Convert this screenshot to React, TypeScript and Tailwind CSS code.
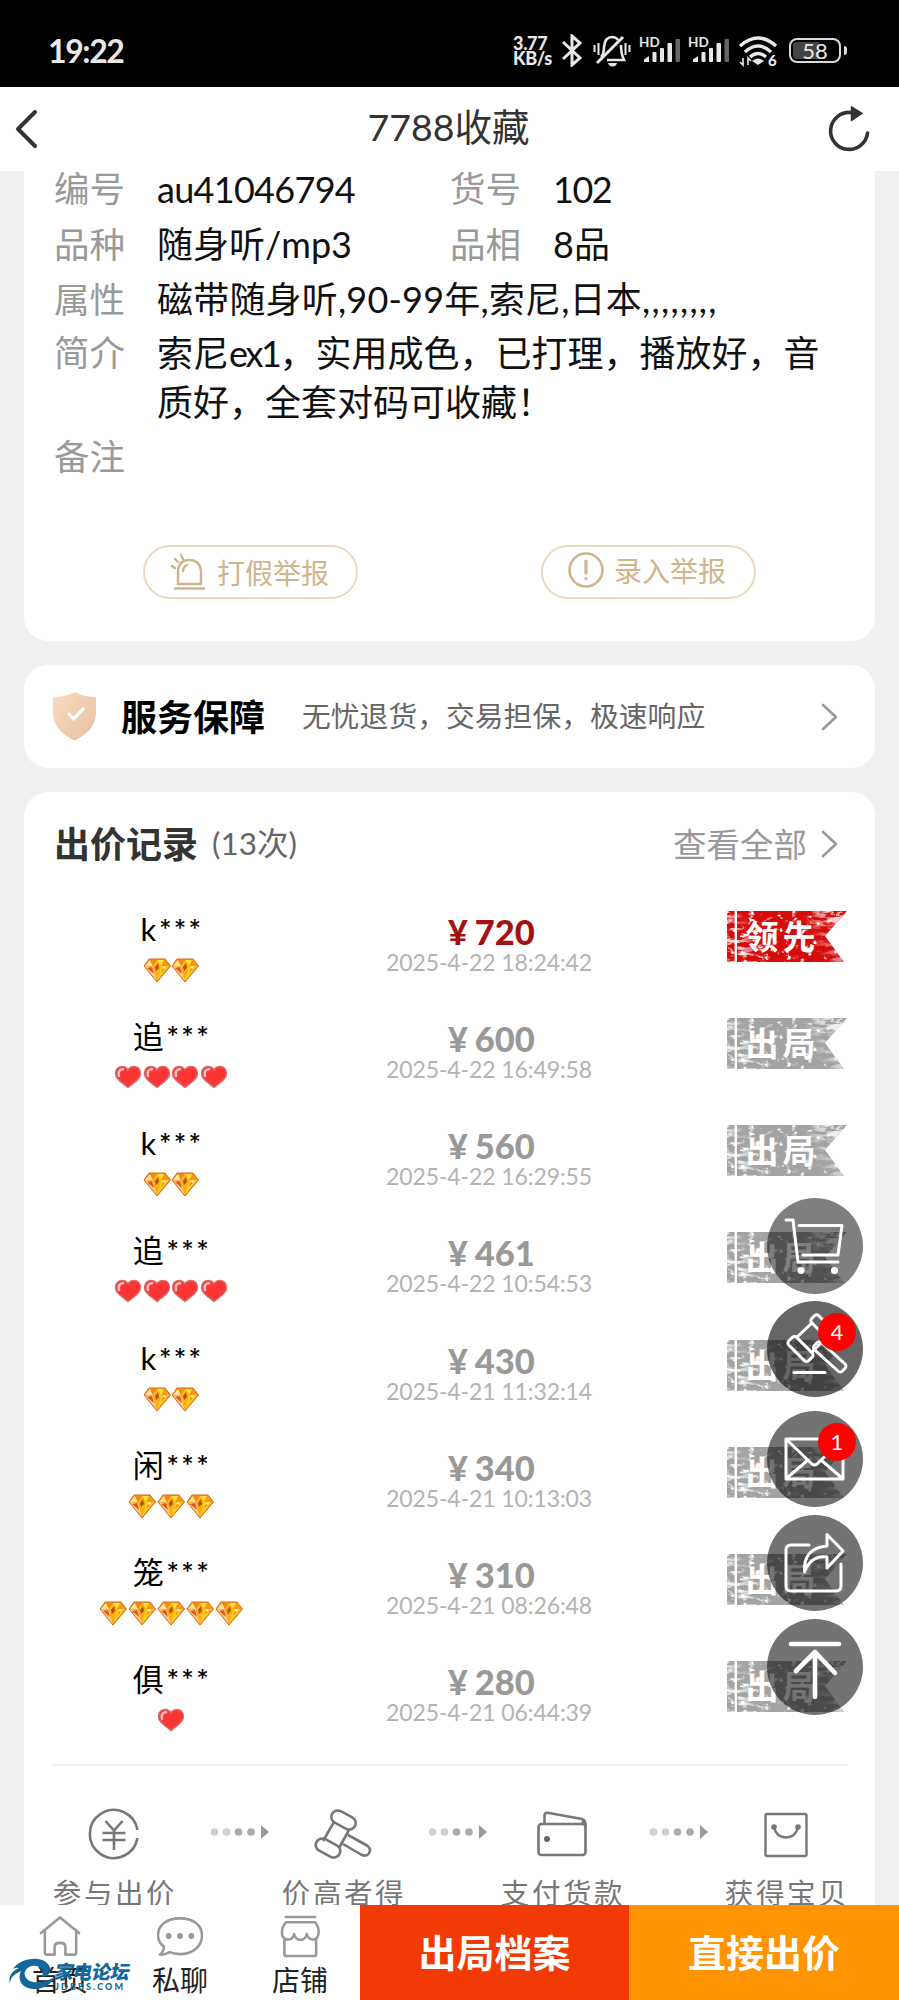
import type { ReactNode } from 'react'

type Rank = 'gem' | 'heart'

interface Bid {
  name: string
  rank: Rank
  level: number
  price: number
  time: string
}

const bids: Bid[] = [
  { name: 'k', rank: 'gem', level: 2, price: 720, time: '2025-4-22 18:24:42' },
  { name: '追', rank: 'heart', level: 4, price: 600, time: '2025-4-22 16:49:58' },
  { name: 'k', rank: 'gem', level: 2, price: 560, time: '2025-4-22 16:29:55' },
  { name: '追', rank: 'heart', level: 4, price: 461, time: '2025-4-22 10:54:53' },
  { name: 'k', rank: 'gem', level: 2, price: 430, time: '2025-4-21 11:32:14' },
  { name: '闲', rank: 'gem', level: 3, price: 340, time: '2025-4-21 10:13:03' },
  { name: '笼', rank: 'gem', level: 5, price: 310, time: '2025-4-21 08:26:48' },
  { name: '俱', rank: 'heart', level: 1, price: 280, time: '2025-4-21 06:44:39' }
]

function Signal() {
  return (
    <svg className="h-[30px] w-[41px]" viewBox="0 0 41 30" fill="#e8e8e8">
      <text x="0" y="12" fontSize="13.5" fontWeight="700" fontFamily="Lato, sans-serif">HD</text>
      <path d="M5 27V24.5L10 21V27Z" />
      <rect x="13.5" y="17" width="4" height="10" rx="1" />
      <rect x="21" y="13" width="4" height="14" rx="1" />
      <rect x="28.5" y="8" width="4.5" height="19" rx="1" />
      <rect x="36.5" y="4" width="4.5" height="23" rx="1" fill="#666" />
    </svg>
  )
}

function StatusBar() {
  return (
    <div className="flex h-[87px] shrink-0 items-start bg-black text-[#e8e8e8]">
      <span className="ml-[48px] mt-[31px] w-[465px] text-[32px] font-bold leading-[40px] tracking-[-1.4px]">19:22</span>
      <div className="mt-[36px] w-[40px] text-[18px] font-black leading-[15px] tracking-[-0.3px]">
        <div>3.77</div>
        <div>KB/s</div>
      </div>
      <svg className="ml-[8px] mt-[34px] h-[33px] w-[22px]" viewBox="0 0 22 33" fill="none" stroke="#e8e8e8" strokeWidth="3">
        <path d="M2 8L19 24L11 31V2L19 9L2 25" strokeLinejoin="miter" />
      </svg>
      <svg className="ml-[10px] mt-[34px] h-[34px] w-[38px]" viewBox="0 0 38 34" fill="none" stroke="#e8e8e8" strokeWidth="2.6">
        <path d="M8 23Q11 20 11 13Q12 3 19 3Q23 3 25 6M28 11Q28 20 31 26H14" />
        <path d="M4 29L30 3" strokeWidth="3" />
        <path d="M15 29H24Q23 32.500 19.500 32.500Q16 32.500 15 29Z" fill="#e8e8e8" stroke="none" />
        <path d="M1.500 11V18M5.500 9V21M32.500 9V21M36.500 11V18" strokeWidth="2" />
      </svg>
      <div className="ml-[8px] mt-[35px] flex gap-[8px]">
        <Signal />
        <Signal />
      </div>
      <svg className="ml-[9px] mt-[36px] h-[31px] w-[42px]" viewBox="0 0 42 31" fill="none" stroke="#e8e8e8" strokeWidth="3.4">
        <path d="M2 10Q20 -6 38 10M7 16Q20 4 33 16M12 21Q20 14 28 21" />
        <path d="M14 25Q20 20 26 25L20 29Z" fill="#e8e8e8" stroke="none" />
        <path d="M5 22V29L2 26M10 29V22L13 25" strokeWidth="1.600" />
        <text x="30" y="30" fontSize="15" fontWeight="900" fontFamily="Lato, sans-serif" fill="#e8e8e8" stroke="none">6</text>
      </svg>
      <div className="ml-[9px] mt-[38px] flex items-center gap-[3px]">
        <div className="flex h-[25px] w-[52px] items-center justify-center rounded-[8px] border-2 border-[#dadada] bg-black p-[2px]">
          <div className="flex h-full w-full items-center justify-center rounded-[4px] bg-[linear-gradient(90deg,#444_58%,#000_58%)] text-[22px] leading-none">
            58
          </div>
        </div>
        <div className="h-[9px] w-[3px] rounded-r bg-[#dadada]" />
      </div>
    </div>
  )
}

function Header() {
  return (
    <header className="flex h-[84px] shrink-0 items-center justify-between bg-white pl-[15px] pr-[29px]">
      <svg className="h-[40px] w-[40px]" viewBox="0 0 40 40" fill="none" stroke="#333" strokeWidth="4" strokeLinecap="round" strokeLinejoin="round">
        <path d="M20 3L3 20L20 37" />
      </svg>
      <h1 className="-mt-[4px] ml-[14px] text-[37.5px] leading-[50px] text-[#333]">7788收藏</h1>
      <svg className="h-[48px] w-[42px]" viewBox="0 0 42 48" fill="none" stroke="#333" strokeWidth="3.600" strokeLinecap="round">
        <path d="M23 7.500A18.500 18.500 0 1 0 39.500 28" />
        <path d="M23.500 2V15.500L34 8.500Z" fill="#333" stroke="#333" strokeWidth="1.500" strokeLinejoin="round" />
      </svg>
    </header>
  )
}

function Label({ children }: { children: ReactNode }) {
  return <span className="w-[103px] shrink-0 text-[35.5px] text-[#999]">{children}</span>
}

function InfoCard() {
  return (
    <section className="flow-root h-[470px] rounded-b-[24px] bg-white pl-[30px] text-[36px] leading-[55px] text-[#111]">
      <div className="flex h-[46px] leading-[36px]">
        <Label>编号</Label>
        <span className="w-[293px] tracking-[-0.7px]">au41046794</span>
        <Label>货号</Label>
        <span className="tracking-[-1.5px]">102</span>
      </div>
      <div className="flex h-[55px]">
        <Label>品种</Label>
        <span className="w-[293px]">随身听/mp3</span>
        <Label>品相</Label>
        <span>8品</span>
      </div>
      <div className="flex h-[55px]">
        <Label>属性</Label>
        <span className="tracking-[0.2px]">
          磁带随身听,90-99年,索尼,日本<span className="tracking-[1.3px]">,,,,,,,,</span>
        </span>
      </div>
      <div className="flex pb-[5px] pt-[2px] leading-[48.5px]">
        <Label>简介</Label>
        <p className="whitespace-nowrap">
          索尼<span className="tracking-[-2.4px]">ex1</span>，实用成色，已打理，播放好，音
          <br />
          质好，全套对码可收藏！
        </p>
      </div>
      <div className="h-[54px] leading-[50px]">
        <Label>备注</Label>
      </div>
      <div className="mt-[60px] flex gap-[183px] pl-[89px] text-[28px] leading-none text-[#cfb58c]">
        <button className="flex h-[54px] w-[215px] items-center rounded-full border-2 border-[#ead9bd] pl-[25px]">
          <svg className="h-[38px] w-[38px]" viewBox="0 0 38 38" fill="none" stroke="#cfb58c" strokeWidth="2.400" strokeLinecap="round">
            <path d="M8 31V18Q9 7 19 7Q30 7 31 18V31ZM5 35.500H34M13 18Q13 14 17 12M2 13L5 15M5 6L8 9M11 2L13 6" />
          </svg>
          <span className="ml-[9px] mt-[2px]">打假举报</span>
        </button>
        <button className="flex h-[54px] w-[215px] items-center rounded-full border-2 border-[#ead9bd] pl-[25px]">
          <svg className="-mt-[4px] h-[36px] w-[36px]" viewBox="0 0 36 36" fill="none" stroke="#cfb58c" strokeWidth="2.600" strokeLinecap="round">
            <circle cx="18" cy="18" r="16.500" />
            <path d="M18 9V21M18 26.500V26.600" strokeWidth="3.200" />
          </svg>
          <span className="-mt-[2px] ml-[10px]">录入举报</span>
        </button>
      </div>
    </section>
  )
}

function Chevron() {
  return (
    <svg className="h-[28px] w-[17px]" viewBox="0 0 17 28" fill="none" stroke="#999" strokeWidth="2.600" strokeLinecap="round" strokeLinejoin="round">
      <path d="M2 2L15 14L2 26" />
    </svg>
  )
}

function ServiceCard() {
  return (
    <section className="mt-[24px] flex h-[103px] items-center rounded-[24px] bg-white pl-[28px] pr-[37px]">
      <svg className="h-[49px] w-[45px]" viewBox="0 0 45 49">
        <defs>
          <linearGradient id="shield" x1="0" y1="0" x2="1" y2="1">
            <stop offset="0" stopColor="#fbdcc2" />
            <stop offset="1" stopColor="#e6bf9f" />
          </linearGradient>
        </defs>
        <path d="M22.500 0Q32 5 43 5Q44 5 44 8V22Q43 39 22.500 48.500Q2 39 1 22V8Q1 5 2 5Q13 5 22.500 0Z" fill="url(#shield)" />
        <path d="M16 21L21.500 27L32 16" fill="none" stroke="#fff" strokeWidth="3.200" />
      </svg>
      <b className="ml-[24px] text-[36px] text-black">服务保障</b>
      <span className="ml-[37px] flex-1 whitespace-nowrap text-[28.8px] text-[#666]">无忧退货，交易担保，极速响应</span>
      <Chevron />
    </section>
  )
}

function Gem() {
  return (
    <svg className="h-[25px] w-[28px]" viewBox="0 0 28 25">
      <path d="M1 8L6 1H22L27.500 8L14 24Z" fill="#f79a10" stroke="#d9641c" strokeWidth="1" strokeLinejoin="round" />
      <path d="M2 8L7 2L10 8Z" fill="#ffe49a" />
      <path d="M7 2H14L10 8Z" fill="#f58a12" />
      <path d="M14 2H21L18 8Z" fill="#ffdf3c" />
      <path d="M10 8L14 2L18 8Z" fill="#ffb81c" />
      <path d="M2 8.500H10L14 23Z" fill="#ffc98a" />
      <path d="M4 10L9 9L11 16Z" fill="#e2581a" />
      <path d="M10 8H18L14 23Z" fill="#ffae12" />
      <path d="M12 9L15 5L16 10L13 13Z" fill="#b5510c" />
      <path d="M18 8H26L14 23Z" fill="#fdd021" />
      <path d="M20 10L24 9L18 15Z" fill="#ef8d10" />
      <circle cx="21.500" cy="9.500" r="1.300" fill="#fff8c8" />
    </svg>
  )
}

function Heart() {
  return (
    <svg className="h-[25px] w-[28px]" viewBox="0 0 28 25">
      <path d="M14 22.500C9 18 1.500 14.500 1.500 8.500C1.500 4 4.500 1.500 8 1.500C11 1.500 13 3 14 5C15 3 17 1.500 20 1.500C23.500 1.500 26.500 4 26.500 8.500C26.500 14.500 19 18 14 22.500Z" fill="#fb3434" stroke="#d86a6a" strokeWidth="1.400" />
      <path d="M5 11Q3.500 4.500 9 4.200" fill="none" stroke="#ffc0c0" strokeWidth="2.600" strokeLinecap="round" />
    </svg>
  )
}

function Stamp({ leading }: { leading: boolean }) {
  return (
    <svg className="mt-[6px] h-[51px] w-[120px]" viewBox="0 0 120 51">
      <g clipPath="url(#flag)">
        <rect width="120" height="51" fill={leading ? '#d60b0b' : '#a3a3a3'} />
        <rect width="120" height="51" filter="url(#grunge)" />
        <g mask="url(#edge)">
          <rect width="120" height="51" filter="url(#scratch)" />
        </g>
        <path d="M8.800 0V51" stroke="#fff" strokeWidth="2.400" />
      </g>
      <text x="18.500" y="37.500" fill="#fff" fontSize="33" fontWeight="700" letterSpacing="4" fontFamily="'Noto Sans CJK SC', sans-serif">
        {leading ? '领先' : '出局'}
      </text>
    </svg>
  )
}

// shared clip, mask and filters of the stamp flags
function StampDefs() {
  return (
    <svg className="absolute h-0 w-0">
      <defs>
        <clipPath id="flag">
          <path d="M0 0H120L98 25L117 51H0Z" />
        </clipPath>
        <linearGradient id="edgeFade" x1="0" x2="1" y1="0.200" y2="0">
          <stop offset="0" stopColor="#ddd" />
          <stop offset="0.180" stopColor="#000" />
          <stop offset="0.600" stopColor="#000" />
          <stop offset="0.850" stopColor="#ccc" />
        </linearGradient>
        <mask id="edge">
          <rect width="120" height="51" fill="url(#edgeFade)" />
        </mask>
        <filter id="grunge" x="0" y="0" width="1" height="1" colorInterpolationFilters="sRGB">
          <feTurbulence type="fractalNoise" baseFrequency="0.14 0.18" numOctaves="3" seed="4" />
          <feColorMatrix values="0 0 0 0 1  0 0 0 0 1  0 0 0 0 1  6 0 0 0 -3.650" />
        </filter>
        <filter id="scratch" x="0" y="0" width="1" height="1" colorInterpolationFilters="sRGB">
          <feTurbulence type="fractalNoise" baseFrequency="0.06 0.22" numOctaves="3" seed="9" />
          <feColorMatrix values="0 0 0 0 1  0 0 0 0 1  0 0 0 0 1  6 0 0 0 -2.800" />
        </filter>
      </defs>
    </svg>
  )
}

function BidRow({ bid, leading }: { bid: Bid; leading: boolean }) {
  return (
    <li className="flex h-[107.14px]">
      <div className="w-[294px]">
        <div className="flex h-[48px] items-center justify-center pl-[2px] text-[31px] leading-[48px] text-black">
          {bid.name}
          <span className="ml-[3px] font-[Inter] text-[24px] tracking-[2.8px]">***</span>
        </div>
        <div className="mt-[5px] flex justify-center gap-[0.8px]">
          {Array.from({ length: bid.level }, (_, i) => (bid.rank === 'gem' ? <Gem key={i} /> : <Heart key={i} />))}
        </div>
      </div>
      <div className="w-[342px] pt-[7px] text-center">
        <div className={`pl-[5px] text-[34.5px] font-black leading-[40px] ${leading ? 'text-[#a31212]' : 'text-[#999]'}`}>
          <span className="mr-[7px] text-[34px]">¥</span>
          {bid.price}
        </div>
        <div className="text-[23px] leading-[20px] tracking-[-0.1px] text-[#b3b3b3]">{bid.time}</div>
      </div>
      <div className="ml-[67px]">
        <Stamp leading={leading} />
      </div>
    </li>
  )
}

function Gavel() {
  return (
    <svg className="h-[52px] w-[58px]" viewBox="0 0 58 52" fill="none" stroke="#777" strokeWidth="2.600">
      <rect x="-13" y="-6.500" width="26" height="13" rx="6.500" transform="translate(29.500 12) rotate(28)" />
      <rect x="-13" y="-6.500" width="26" height="13" rx="6.500" transform="translate(14 40) rotate(28)" />
      <path d="M20 14L9 33M35 22L25 40M34 27L53 37.500Q58 41 54.500 46Q52 49 47 46.500L29 36" strokeLinejoin="round" />
    </svg>
  )
}

const steps = [
  {
    label: '参与出价',
    icon: (
      <svg className="h-[52px] w-[52px]" viewBox="0 0 52 52" fill="none" stroke="#777" strokeWidth="2.600">
        <path d="M49.500 22A24 24 0 1 0 49.500 30" />
        <path d="M17.500 13L26 22.500L34.500 13M14.500 25H37.500M14.500 32H37.500M26 22V42" />
      </svg>
    ),
    arrow: 'ml-[34px] mr-[12px]'
  },
  { label: '价高者得', icon: <Gavel />, arrow: 'ml-[23px] mr-[13px]' },
  {
    label: '支付货款',
    icon: (
      <svg className="h-[52px] w-[50px]" viewBox="0 0 50 52" fill="none" stroke="#777" strokeWidth="2.600" strokeLinejoin="round">
        <rect x="1.500" y="16" width="47" height="31" rx="3" />
        <path d="M7.500 16V7Q8 4 12 5L45 11Q49 12 48.500 19M44 16Q47 15 46 12" />
        <circle cx="10" cy="31" r="3" fill="#666" stroke="none" />
      </svg>
    ),
    arrow: 'ml-[25px] mr-[16px]'
  },
  {
    label: '获得宝贝',
    icon: (
      <svg className="h-[52px] w-[44px]" viewBox="0 0 44 52" fill="none" stroke="#777" strokeWidth="2.400">
        <rect x="1.500" y="6" width="41" height="42" rx="1.500" />
        <path d="M10 19Q12 29 22 29.500Q32 29 34 19" />
        <circle cx="10" cy="19" r="2.800" fill="#777" stroke="none" />
        <circle cx="34" cy="19" r="2.800" fill="#777" stroke="none" />
      </svg>
    ),
    arrow: ''
  }
]

function Steps() {
  return (
    <div className="ml-[28px] flex pt-[42px]">
      {steps.map((step) => (
        <div key={step.label} className="flex shrink-0">
          <div className="flex w-[124px] flex-col items-center">
            {step.icon}
            <span className="mt-[12px] whitespace-nowrap pl-[2px] text-[28.5px] leading-[42px] tracking-[2.6px] text-[#777]">{step.label}</span>
          </div>
          {step.arrow && (
            <svg className={`mt-[16px] h-[16px] w-[59px] ${step.arrow}`} viewBox="0 0 59 16">
              <circle cx="4.500" cy="8" r="3.800" fill="#d0d0d0" />
              <circle cx="16.500" cy="8" r="3.800" fill="#d0d0d0" />
              <circle cx="28.500" cy="8" r="3.800" fill="#aaa" />
              <circle cx="41" cy="8" r="3.800" fill="#aaa" />
              <path d="M51 1L59 8L51 15Z" fill="#999" />
            </svg>
          )}
        </div>
      ))}
    </div>
  )
}

function BidCard() {
  return (
    <section className="mt-[24px] h-[1130px] rounded-t-[24px] bg-white">
      <div className="flex h-[104px] items-center pl-[30px] pr-[37px]">
        <b className="text-[36px] text-[#333]">出价记录</b>
        <span className="ml-[14px] flex-1 text-[31.5px] text-[#666]">(13次)</span>
        <span className="mr-[14px] text-[33.5px] text-[#999]">查看全部</span>
        <Chevron />
      </div>
      <ul className="mt-[9px]">
        {bids.map((bid, i) => (
          <BidRow key={bid.time} bid={bid} leading={i === 0} />
        ))}
      </ul>
      <div className="mx-[28px] mt-[2px] h-[2px] bg-[#f0f0f0]" />
      <Steps />
    </section>
  )
}

const floats = [
  {
    bg: 'bg-black/50 mb-[7px]',
    badge: '',
    icon: (
      <>
        <path d="M19 22H26L31 64H71M32 27.500H75L71 57H36" />
        <circle cx="34" cy="72.500" r="3.600" fill="#fff" stroke="none" />
        <circle cx="67.500" cy="72.500" r="3.600" fill="#fff" stroke="none" />
      </>
    )
  },
  {
    bg: 'bg-black/60 mb-[14px]',
    badge: '4',
    icon: (
      <>
        <rect x="-14" y="-5" width="28" height="10" rx="3" transform="translate(56 26) rotate(45)" />
        <rect x="-14" y="-5.500" width="28" height="11" rx="3" transform="translate(33.500 48) rotate(45)" />
        <path d="M30 36L45 22M45 51L59 37" />
        <rect x="-20" y="-5" width="38" height="10" rx="3" transform="translate(63.500 56.500) rotate(42)" />
        <path d="M27 71.500H58" />
      </>
    )
  },
  {
    bg: 'bg-black/55 mb-[8px]',
    badge: '1',
    icon: <path d="M19 28H76V68H19ZM19 28L45 53Q47.500 55 50 53L76 28M20 67L41 49M75 67L54 49" />
  },
  {
    bg: 'bg-black/55 mb-[8px]',
    badge: '',
    icon: <path d="M42 30H24Q19 30 19 35V71Q19 76 24 76H69Q74 76 74 71V49M60 19.500L76 36L60 53V42Q44 40 37.500 57Q36 33 60 31Z" />
  },
  {
    bg: 'bg-black/55',
    badge: '',
    icon: <path d="M24 25H72M48 78V33M29 52L48 33L68 54" strokeWidth="4.600" />
  }
]

function FloatButtons() {
  return (
    <div className="absolute left-[767px] top-[1198px]">
      {floats.map((item, i) => (
        <button key={i} className={`relative block h-[96px] w-[96px] rounded-full ${item.bg}`}>
          <svg className="h-[96px] w-[96px]" viewBox="0 0 96 96" fill="none" stroke="#fff" strokeWidth="3" strokeLinecap="round" strokeLinejoin="round">
            {item.icon}
          </svg>
          {item.badge && (
            <span className="absolute left-[51px] top-[12px] flex h-[38px] w-[38px] items-center justify-center rounded-full bg-[#ff0000] text-[22px] leading-none text-white">
              {item.badge}
            </span>
          )}
        </button>
      ))}
    </div>
  )
}

const tabs = [
  { label: '首页', icon: <path d="M2 18L21.500 2L41 18M6 15V38Q6 40 8 40H16V32Q16 28 21.500 28Q27 28 27 32V40H36Q38 40 38 38V15" /> },
  {
    label: '私聊',
    icon: (
      <>
        <path d="M5 32Q-1 27 -1 20.500C-1 10 8 3 21.500 3S44 10 44 20.500S35 39.500 21.500 39.500Q15 39.500 11 37.500Q6 40.500 1 40Q5 37 5 32Z" />
        <path d="M10 21V21.100M21.500 21V21.100M33 21V21.100" strokeWidth="6" />
      </>
    )
  },
  {
    label: '店铺',
    icon: <path d="M7 1.500H37M7 7H37Q41 12 40.500 18Q40 24 35 24.500Q30 25 28.500 19Q27 25 22 25Q17 25 15.500 19Q14 25 9 24.500Q3 24 3 18Q3 12 7 7ZM5.500 24V39Q5.500 41.500 8 41.500H36Q38 41.500 38 39V24" />
  }
]

function BottomBar() {
  return (
    <footer className="flex h-[95px] shrink-0 bg-white">
      <nav className="flex w-[360px]">
        {tabs.map((tab) => (
          <div key={tab.label} className="flex w-[120px] flex-col items-center pt-[10px]">
            <svg className="h-[43px] w-[46px]" viewBox="-2 0 47 43" fill="none" stroke="#999" strokeWidth="2.600" strokeLinecap="round" strokeLinejoin="round">
              {tab.icon}
            </svg>
            <span className="mt-[4px] text-[28px] leading-[36px] text-[#222]">{tab.label}</span>
          </div>
        ))}
      </nav>
      <button className="w-[269px] bg-[#f23a05] text-[38px] font-bold text-white">出局档案</button>
      <button className="w-[270px] bg-[#ff9503] text-[38px] font-bold text-white">直接出价</button>
    </footer>
  )
}

function ForumMark() {
  return (
    <div className="absolute left-[9px] top-[1957px] flex text-[#11679a]">
      <svg className="h-[34px] w-[48px]" viewBox="0 0 48 34" fill="currentColor">
        <path d="M4 12C10 2 30 -2 38 6C44 12 42 19 33 20C36 12 28 6 20 10C12 15 16 24 24 25C32 26 42 24 47 18C43 27 34 33 24 32C12 31 8 22 12 14C6 17 1 20 1 27C-1 19 3 14 10 11Q7 10 4 12Z" />
      </svg>
      <div className="-ml-[2px] mt-[4px]">
        <div className="-skew-x-12 text-[19px] font-black leading-[21px] tracking-[-0.3px]">家电论坛</div>
        <div className="text-[9px] font-black leading-[9px] tracking-[2.1px]">JDBBS.COM</div>
      </div>
    </div>
  )
}

export default function App() {
  return (
    <div className="relative flex h-[2000px] w-[899px] flex-col overflow-hidden bg-[#f0f0f0] font-[Lato,'Noto_Sans_CJK_SC',sans-serif]">
      <StampDefs />
      <StatusBar />
      <Header />
      <main className="min-h-0 flex-1 overflow-hidden px-[24px]">
        <InfoCard />
        <ServiceCard />
        <BidCard />
      </main>
      <BottomBar />
      <FloatButtons />
      <ForumMark />
    </div>
  )
}
